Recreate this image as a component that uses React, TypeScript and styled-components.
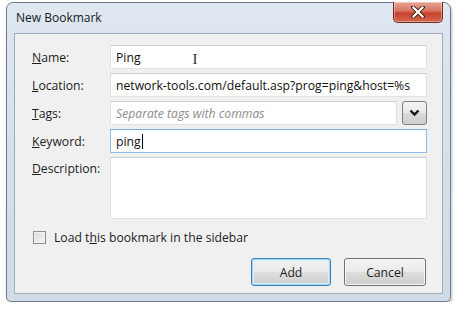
import styled, { createGlobalStyle } from "styled-components";

const Global = createGlobalStyle`
  html, body {
    margin: 0;
    padding: 0;
    background: #ffffff;
  }
  body {
    font-family: "Open Sans", "Noto Sans", "Liberation Sans", sans-serif;
    font-size: 12.2px;
    color: #1e1e1e;
  }
`;

const Window = styled.div`
  box-sizing: border-box;
  width: 445px;
  height: 300px;
  margin: 2px 0 0 6px;
  border: 1px solid #6f7c8b;
  border-radius: 7px 7px 5px 5px;
  background: linear-gradient(180deg, #dfe7f0 0%, #d6e1ec 40%, #d0dbe7 100%);
  box-shadow: 1px 2px 3px rgba(0, 0, 0, 0.25);
  display: flex;
  flex-direction: column;
  padding: 0 7px 7px 7px;
`;

const TitleBar = styled.div`
  height: 30px;
  display: flex;
  align-items: flex-start;
  justify-content: space-between;
`;

const Title = styled.div`
  padding: 6px 0 0 2px;
  font-size: 12px;
  color: #1a1a1a;
`;

const CloseButton = styled.div`
  box-sizing: border-box;
  width: 50px;
  height: 21px;
  margin-top: -1px;
  border: 1px solid #6e2c25;
  border-top: none;
  border-radius: 0 0 5px 5px;
  background: linear-gradient(180deg, #e8a697 0%, #d67460 45%, #c6412b 55%, #d4674f 100%);
  display: flex;
  align-items: center;
  justify-content: center;
  box-shadow: inset 0 0 0 1px rgba(255, 255, 255, 0.35);
`;

const Client = styled.div`
  flex: 1;
  box-sizing: border-box;
  border: 1px solid #a3adb9;
  background: #f0f0f0;
  padding: 11px 15px 0 17px;
  display: flex;
  flex-direction: column;
`;

const Form = styled.div`
  display: grid;
  grid-template-columns: 78px 1fr;
  row-gap: 4px;
  align-items: center;
`;

const Label = styled.label<{ $top?: boolean }>`
  align-self: ${(p) => (p.$top ? "start" : "center")};
  padding-top: ${(p) => (p.$top ? "3px" : "0")};
  color: #1e1e1e;
  u {
    text-decoration: underline;
    text-underline-offset: 1px;
  }
`;

const Field = styled.div<{ $focus?: boolean }>`
  box-sizing: border-box;
  height: 24px;
  background: #ffffff;
  border: 1px solid ${(p) => (p.$focus ? "#8dbde9" : "#dfe3e8")};
  border-top-color: ${(p) => (p.$focus ? "#7aaedf" : "#ccd1d8")};
  padding: 0 5px;
  display: flex;
  align-items: center;
  white-space: nowrap;
  overflow: hidden;
  color: #111;
`;

const Placeholder = styled.span`
  color: #8c8c8c;
  font-style: italic;
`;

const Caret = styled.span`
  display: inline-block;
  width: 1px;
  height: 15px;
  background: #000;
  margin-left: 1px;
`;

const IBeam = styled.span`
  margin-left: 52px;
  margin-top: 4px;
  color: #333;
  font-family: "Liberation Serif", serif;
  font-size: 15px;
  line-height: 1;
`;

const TagRow = styled.div`
  display: flex;
  gap: 5px;
  align-items: center;
`;

const TagField = styled(Field)`
  flex: 1;
`;

const DropButton = styled.div`
  box-sizing: border-box;
  width: 25px;
  height: 24px;
  border: 1px solid #7f7f7f;
  border-radius: 3px;
  background: linear-gradient(180deg, #f4f4f4 0%, #e8e8e8 50%, #d9d9d9 51%, #cfcfcf 100%);
  display: flex;
  align-items: center;
  justify-content: center;
`;

const TextArea = styled.div`
  box-sizing: border-box;
  height: 62px;
  background: #ffffff;
  border: 1px solid #dfe3e8;
  border-top-color: #ccd1d8;
`;

const CheckRow = styled.div`
  display: flex;
  align-items: center;
  gap: 8px;
  margin: 10px 0 0 1px;
  u {
    text-decoration: underline;
    text-underline-offset: 1px;
  }
`;

const CheckBox = styled.span`
  box-sizing: border-box;
  width: 13px;
  height: 13px;
  border: 1px solid #8f8f8f;
  background: linear-gradient(135deg, #dcdcdc 0%, #f4f4f4 100%);
  box-shadow: inset 0 0 0 1px #f2f2f2;
`;

const Buttons = styled.div`
  display: flex;
  justify-content: flex-end;
  gap: 13px;
  margin-top: 12px;
  padding-right: 1px;
`;

const Button = styled.div<{ $default?: boolean }>`
  box-sizing: border-box;
  width: ${(p) => (p.$default ? "80px" : "82px")};
  height: 28px;
  border: 1px solid ${(p) => (p.$default ? "#3c7fb1" : "#707070")};
  border-radius: 3px;
  background: linear-gradient(180deg, #f2f2f2 0%, #ebebeb 50%, #dddddd 51%, #cfcfcf 100%);
  box-shadow: ${(p) =>
    p.$default ? "inset 0 0 0 1px #9fd8f2, inset 0 0 0 2px #d8eef8" : "inset 0 0 0 1px #f8f8f8"};
  display: flex;
  align-items: center;
  justify-content: center;
  color: #1e1e1e;
`;

export default function App() {
  return (
    <>
      <Global />
      <Window>
        <TitleBar>
          <Title>New Bookmark</Title>
          <CloseButton>
            <svg width="14" height="12" viewBox="0 0 14 12">
              <path
                d="M2 1 L12 11 M12 1 L2 11"
                stroke="#4a1d17"
                strokeWidth="4"
                strokeLinecap="square"
              />
              <path
                d="M2.5 1.5 L11.5 10.5 M11.5 1.5 L2.5 10.5"
                stroke="#ffffff"
                strokeWidth="2.2"
                strokeLinecap="square"
              />
            </svg>
          </CloseButton>
        </TitleBar>
        <Client>
          <Form>
            <Label>
              <u>N</u>ame:
            </Label>
            <Field>
              Ping
              <IBeam>I</IBeam>
            </Field>
            <Label>
              <u>L</u>ocation:
            </Label>
            <Field>network-tools.com/default.asp?prog=ping&amp;host=%s</Field>
            <Label>
              <u>T</u>ags:
            </Label>
            <TagRow>
              <TagField>
                <Placeholder>Separate tags with commas</Placeholder>
              </TagField>
              <DropButton>
                <svg width="11" height="8" viewBox="0 0 11 8">
                  <path d="M1.5 1.5 L5.5 5.5 L9.5 1.5" fill="none" stroke="#111" strokeWidth="2.4" />
                </svg>
              </DropButton>
            </TagRow>
            <Label>
              <u>K</u>eyword:
            </Label>
            <Field $focus>
              ping
              <Caret />
            </Field>
            <Label $top>
              <u>D</u>escription:
            </Label>
            <TextArea />
          </Form>
          <CheckRow>
            <CheckBox />
            <span>
              Load t<u>h</u>is bookmark in the sidebar
            </span>
          </CheckRow>
          <Buttons>
            <Button $default>Add</Button>
            <Button>Cancel</Button>
          </Buttons>
        </Client>
      </Window>
    </>
  );
}
